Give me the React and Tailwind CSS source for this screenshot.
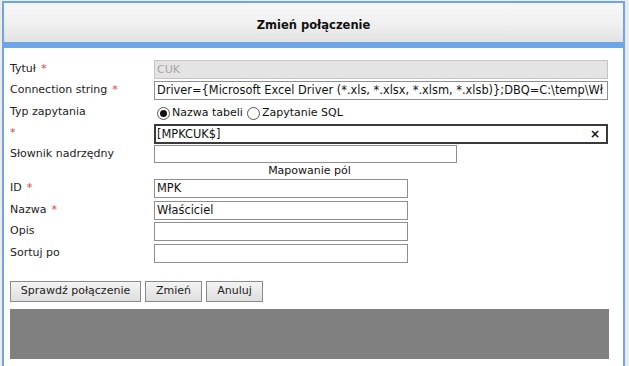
import React from "react";

const F = { fontFamily: '"DejaVu Sans", Verdana, sans-serif' };

function Row({ label, star, children, h }) {
  return (
    <div className={`flex items-center ${h}`}>
      <div className="w-[144px] shrink-0 text-[11px] text-[#222]">
        {label}
        {star && (
          <span className={`text-[#e23b3b] ${label ? "ml-[5px]" : ""}`}>*</span>
        )}
      </div>
      {children}
    </div>
  );
}

function Field({ value = "", w = "w-[454px]", h = "h-[19px]", className = "" }) {
  return (
    <div
      className={`${w} ${h} border border-[#8f8f8f] bg-white px-[2px] text-[11.4px] leading-[17px] text-[#111] overflow-hidden whitespace-nowrap ${className}`}
    >
      {value}
    </div>
  );
}

function Radio({ checked }) {
  return (
    <span className="inline-flex w-[13px] h-[13px] rounded-full border border-[#555] bg-white items-center justify-center mr-[2px]">
      {checked && <span className="w-[7px] h-[7px] rounded-full bg-[#111]" />}
    </span>
  );
}

function Btn({ children, w }) {
  return (
    <div
      className={`${w} h-[21px] border border-[#8a8a8a] bg-gradient-to-b from-[#f4f4f4] to-[#dedede] text-[11px] text-[#222] flex items-center justify-center`}
    >
      {children}
    </div>
  );
}

export default function App() {
  return (
    <div className="w-[629px] h-[366px] overflow-hidden bg-[#ebebeb]" style={F}>
      <div className="ml-[2px] mt-[1px] w-[623px] h-[400px] border-2 border-[#6ea5e6] bg-white flex flex-col">
        <div className="h-[39px] pt-[6px] bg-gradient-to-b from-[#f7f7f7] via-[#f1f1f1] to-[#e2e2e2] flex items-center justify-center font-bold text-[11.5px] text-[#111]">
          Zmień połączenie
        </div>
        <div className="h-[6px] bg-[#6ea5e6]" />
        <div className="pl-[6px] pt-[11px] flex flex-col">
          <Row label="Tytuł" star h="h-[21px]">
            <div className="w-[454px] h-[19px] border border-[#c4c4c4] bg-[#e4e4e4] px-[2px] text-[11px] leading-[17px] text-[#a6a6a6]">
              CUK
            </div>
          </Row>
          <Row label="Connection string" star h="h-[21px]">
            <Field value={"Driver={Microsoft Excel Driver (*.xls, *.xlsx, *.xlsm, *.xlsb)};DBQ=C:\\temp\\Wł"} />
          </Row>
          <Row label="Typ zapytania" h="h-[22px]">
            <div className="flex items-center text-[11px] text-[#111] pl-[3px] pt-[2px]">
              <Radio checked />
              <span className="mr-[4px]">Nazwa tabeli</span>
              <Radio />
              <span>Zapytanie SQL</span>
            </div>
          </Row>
          <Row label="" star h="h-[21px]">
            <div className="w-[454px] h-[20px] border-2 border-[#3a3a3a] bg-white pl-[1px] pr-[6px] text-[11.4px] leading-[16px] text-[#111] flex justify-between items-center">
              <span>[MPKCUK$]</span>
              <span className="text-[12px] font-bold">×</span>
            </div>
          </Row>
          <Row label="Słownik nadrzędny" h="h-[20px]">
            <Field w="w-[303px]" h="h-[18px]" />
          </Row>
          <div className="h-[14px] w-[599px] text-center text-[11px] text-[#111] leading-[14px]">
            Mapowanie pól
          </div>
          <Row label="ID" star h="h-[21px]">
            <Field w="w-[254px]" value="MPK" />
          </Row>
          <Row label="Nazwa" star h="h-[22px]">
            <Field w="w-[254px]" value="Właściciel" />
          </Row>
          <Row label="Opis" h="h-[21px]">
            <Field w="w-[254px]" />
          </Row>
          <Row label="Sortuj po" h="h-[22px]">
            <Field w="w-[254px]" />
          </Row>
          <div className="flex gap-[4px] mt-[17px]">
            <Btn w="w-[131px]">Sprawdź połączenie</Btn>
            <Btn w="w-[57px]">Zmień</Btn>
            <Btn w="w-[57px]">Anuluj</Btn>
          </div>
          <div className="mt-[7px] w-[599px] h-[50px] bg-[#808080]" />
        </div>
      </div>
    </div>
  );
}
